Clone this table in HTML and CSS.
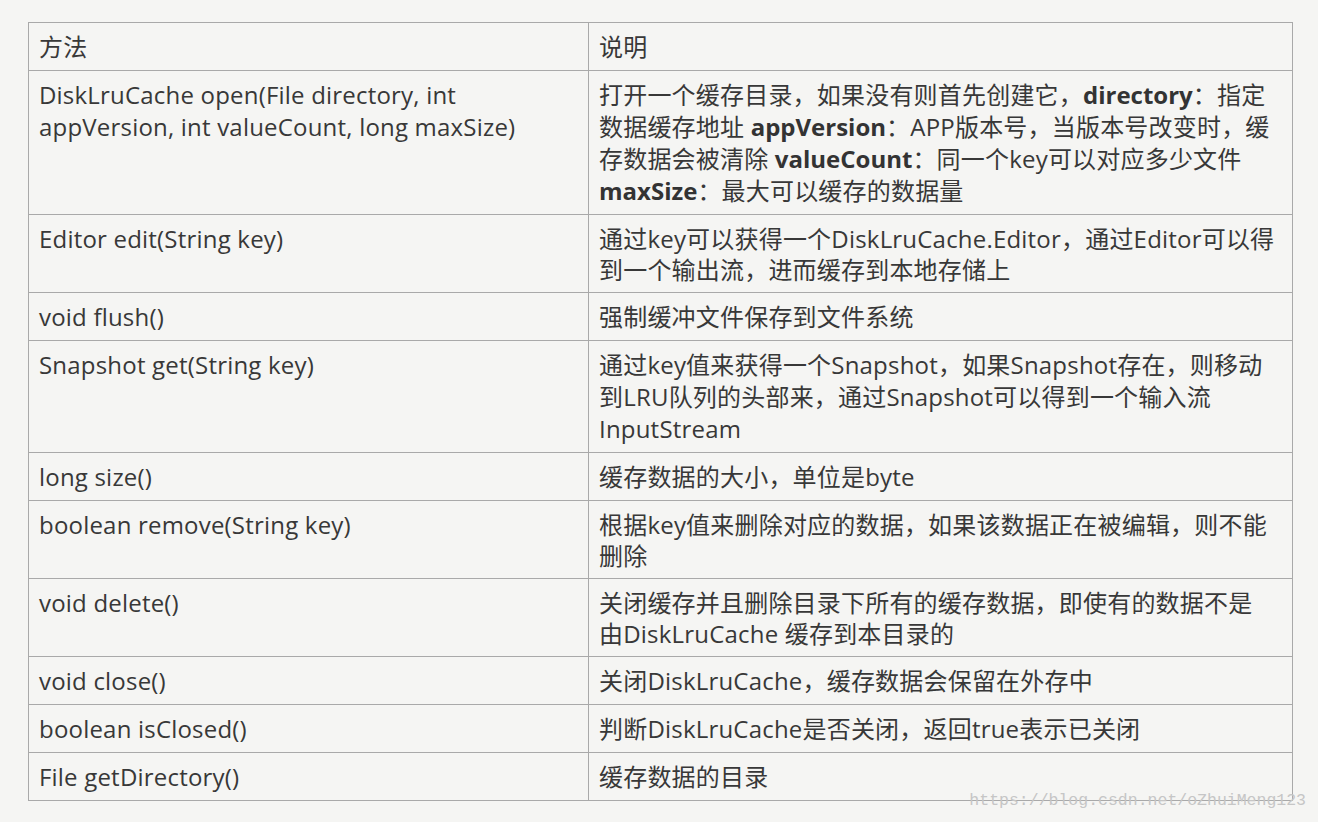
FILE: index.html
```html
<!DOCTYPE html>
<html lang="zh-CN">
<head>
<meta charset="utf-8">
<title>DiskLruCache 方法</title>
<link rel="stylesheet" href="styles.css">
</head>
<body>
<div class="page">
  <table class="api">
    <colgroup><col class="c-method"><col class="c-desc"></colgroup>
    <tbody>
      <tr><td>方法</td><td>说明</td></tr>
      <tr>
        <td>DiskLruCache open(File directory, int<br>appVersion, int valueCount, long maxSize)</td>
        <td>打开一个缓存目录，如果没有则首先创建它，<b>directory</b>：指定<br>数据缓存地址 <b>appVersion</b>：APP版本号，当版本号改变时，缓<br>存数据会被清除 <b>valueCount</b>：同一个key可以对应多少文件<br><b>maxSize</b>：最大可以缓存的数据量</td>
      </tr>
      <tr class="two">
        <td>Editor edit(String key)</td>
        <td>通过key可以获得一个DiskLruCache.Editor，通过Editor可以得<br>到一个输出流，进而缓存到本地存储上</td>
      </tr>
      <tr><td>void flush()</td><td>强制缓冲文件保存到文件系统</td></tr>
      <tr>
        <td>Snapshot get(String key)</td>
        <td>通过key值来获得一个Snapshot，如果Snapshot存在，则移动<br>到LRU队列的头部来，通过Snapshot可以得到一个输入流<br>InputStream</td>
      </tr>
      <tr><td>long size()</td><td>缓存数据的大小，单位是byte</td></tr>
      <tr class="two">
        <td>boolean remove(String key)</td>
        <td>根据key值来删除对应的数据，如果该数据正在被编辑，则不能<br>删除</td>
      </tr>
      <tr class="two">
        <td>void delete()</td>
        <td>关闭缓存并且删除目录下所有的缓存数据，即使有的数据不是<br>由DiskLruCache 缓存到本目录的</td>
      </tr>
      <tr><td>void close()</td><td>关闭DiskLruCache，缓存数据会保留在外存中</td></tr>
      <tr><td>boolean isClosed()</td><td>判断DiskLruCache是否关闭，返回true表示已关闭</td></tr>
      <tr><td>File getDirectory()</td><td>缓存数据的目录</td></tr>
    </tbody>
  </table>
  <div class="watermark">https://blog.csdn.net/oZhuiMeng123</div>
</div>
</body>
</html>
```

FILE: styles.css
```css
html, body {
  margin: 0;
  padding: 0;
  background: #f5f5f3;
}

.page {
  position: relative;
  width: 1318px;
  height: 822px;
  padding: 22px 0 0 28px;
  box-sizing: border-box;
  overflow: hidden;
}

.api {
  border-collapse: collapse;
  table-layout: fixed;
  width: 1264px;
  font-family: "Open Sans", "Noto Sans CJK SC", sans-serif;
  font-size: 24px;
  letter-spacing: 0.2px;
  line-height: 32px;
  color: #383838;
}

.c-method { width: 560px; }
.c-desc { width: 704px; }

.api td {
  border: 1px solid #a9a9a9;
  padding: 8px 10px 7px 10px;
  vertical-align: top;
  white-space: nowrap;
  overflow: hidden;
}

.api tr.two td {
  line-height: 31px;
}

.api b {
  font-weight: 700;
  letter-spacing: 0;
  color: #333;
}

.watermark {
  position: absolute;
  right: 12px;
  top: 791px;
  font-family: "Liberation Mono", "DejaVu Sans Mono", monospace;
  font-size: 16.5px;
  line-height: 20px;
  color: #c6c6c6;
  white-space: nowrap;
}
```
